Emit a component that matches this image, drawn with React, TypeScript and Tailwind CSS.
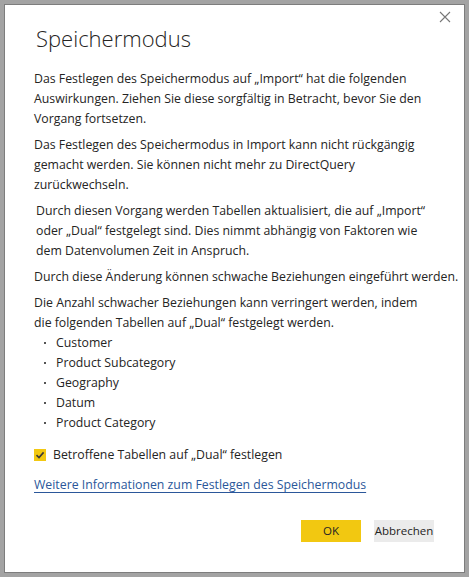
const TABLES = ['Customer', 'Product Subcategory', 'Geography', 'Datum', 'Product Category']

function Lines({ lines, className = '' }: { lines: string[]; className?: string }) {
    return (
        <p className={className}>
            {lines.map((l) => (
                <span key={l} className="block whitespace-nowrap">{l}</span>
            ))}
        </p>
    )
}

export default function App() {
    return (
        <div className="w-[469px] h-[577px] bg-[#a3a3a3] p-[4px] font-['Open_Sans',sans-serif]">
            <div className="relative h-full border border-[#7d7d7d] bg-white pl-[29px] pr-[20px] text-[#252423]">
                {/* close */}
                <button className="absolute right-[12px] top-[5px] w-[14px] h-[14px] flex items-center justify-center">
                    <svg width="12" height="12" viewBox="0 0 12 12" stroke="#777" strokeWidth="1.1">
                        <path d="M1 1L11 11M11 1L1 11" />
                    </svg>
                </button>

                <h1 className="pt-[18px] text-[22px] font-light leading-[30px] text-[#252423] ml-[2px]">Speichermodus</h1>

                <div className="mt-[16px] text-[12.3px] leading-[20px] space-y-[6px]">
                    <Lines
                        lines={[
                            'Das Festlegen des Speichermodus auf „Import“ hat die folgenden',
                            'Auswirkungen. Ziehen Sie diese sorgfältig in Betracht, bevor Sie den',
                            'Vorgang fortsetzen.',
                        ]}
                    />
                    <Lines
                        lines={[
                            'Das Festlegen des Speichermodus in Import kann nicht rückgängig',
                            'gemacht werden. Sie können nicht mehr zu DirectQuery',
                            'zurückwechseln.',
                        ]}
                    />
                    <Lines
                        className="ml-[2px]"
                        lines={[
                            'Durch diesen Vorgang werden Tabellen aktualisiert, die auf „Import“',
                            'oder „Dual“ festgelegt sind. Dies nimmt abhängig von Faktoren wie',
                            'dem Datenvolumen Zeit in Anspruch.',
                        ]}
                    />
                    <Lines lines={['Durch diese Änderung können schwache Beziehungen eingeführt werden.']} />
                    <div>
                        <Lines
                            lines={[
                                'Die Anzahl schwacher Beziehungen kann verringert werden, indem',
                                'die folgenden Tabellen auf „Dual“ festgelegt werden.',
                            ]}
                        />
                        <ul>
                            {TABLES.map((t) => (
                                <li key={t} className="flex items-center">
                                    <span className="shrink-0 w-[2px] h-[2px] bg-[#555] ml-[10px] mr-[10px] mt-[-1px]" />
                                    {t}
                                </li>
                            ))}
                        </ul>
                    </div>
                </div>

                <label className="mt-[12px] flex items-center text-[12.3px] leading-[20px]">
                    <span className="w-[12px] h-[12px] bg-[#f2c811] flex items-center justify-center mr-[7px]">
                        <svg width="10" height="10" viewBox="0 0 10 10" fill="none" stroke="#3b3a39" strokeWidth="1.6">
                            <path d="M1.5 5.2L4 7.6L8.6 2.4" />
                        </svg>
                    </span>
                    Betroffene Tabellen auf „Dual“ festlegen
                </label>

                <a href="#" className="mt-[10px] block text-[12.3px] leading-[20px] text-[#2b579a] underline underline-offset-[3px]">
                    Weitere Informationen zum Festlegen des Speichermodus
                </a>

                <div className="mt-[25px] flex justify-end gap-[13px] pr-[10px]">
                    <button className="w-[60px] h-[22px] bg-[#f2c811] text-[11.5px] text-[#252423]">OK</button>
                    <button className="w-[60px] h-[22px] bg-[#ebebeb] text-[11.5px] text-[#252423]">Abbrechen</button>
                </div>
            </div>
        </div>
    )
}
